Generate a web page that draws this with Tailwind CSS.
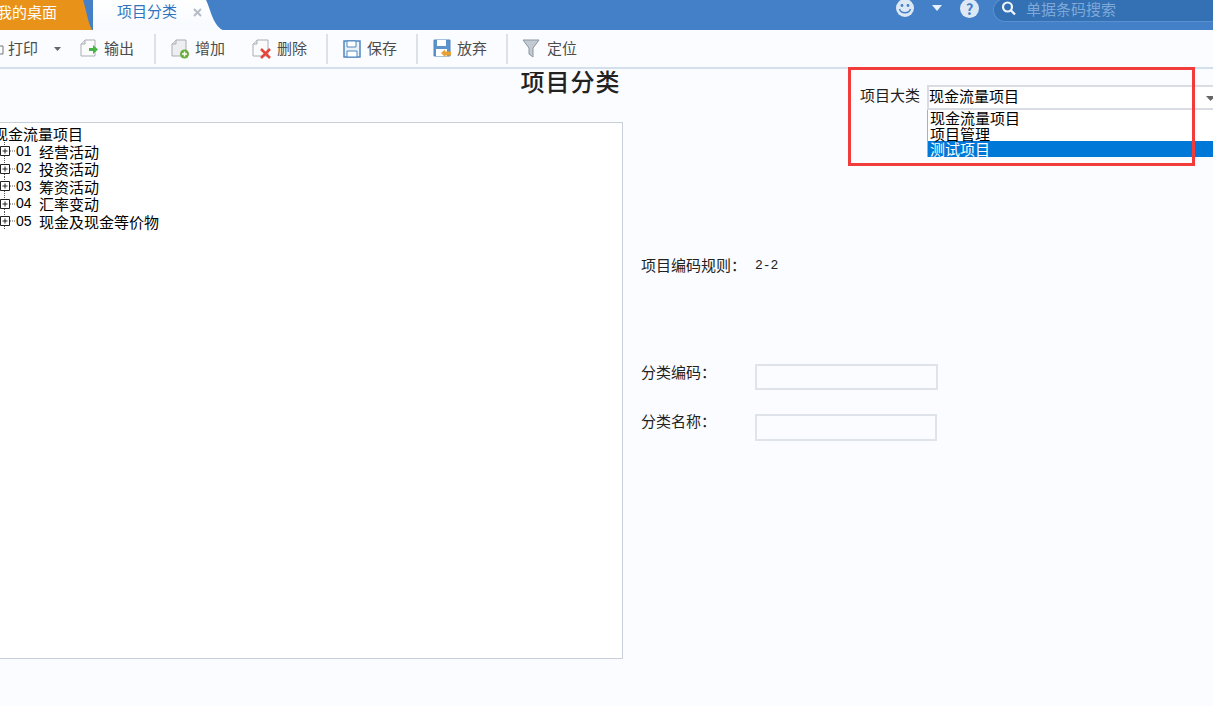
<!DOCTYPE html>
<html lang="zh">
<head>
    <meta charset="UTF-8">
    <title>项目分类</title>
    <script src="https://cdn.jsdelivr.net/npm/@tailwindcss/browser@4"></script>
</head>
<body class="w-[1213px] h-[706px] overflow-hidden bg-[#fafcff] font-['Noto_Sans_CJK_SC','Liberation_Sans',sans-serif] text-[#222]">
    <!-- top bar -->
    <header class="h-[30px] bg-[#4480c8] flex items-stretch relative">
        <div class="relative w-[93px] h-[31px] text-white text-[15px] leading-[23px]">
            <svg class="absolute inset-0" width="93" height="31"><path d="M0 0H83C86 8 88 25 93 31H0Z" fill="#e9921a"/></svg>
            <span class="relative -ml-[3px] block">我的桌面</span>
        </div>
        <div class="relative w-[132px] h-[31px] text-[#2f74bd] text-[15px] leading-[22px]">
            <svg class="absolute inset-0" width="132" height="31">
                <defs><linearGradient id="tabg" x1="0" y1="0" x2="0" y2="1"><stop offset="0" stop-color="#ffffff"/><stop offset="1" stop-color="#f6f9fe"/></linearGradient></defs>
                <path d="M0 0H113C118 10 120 27 132 31H0Z" fill="url(#tabg)"/>
            </svg>
            <span class="absolute left-[24px] top-0">项目分类</span>
            <svg class="absolute left-[100px] top-[8px]" width="9" height="9" viewBox="0 0 9 9"><path d="M1 1L8 8M8 1L1 8" stroke="#b4bcc8" stroke-width="2"/></svg>
        </div>
        <div class="ml-auto flex items-center h-[18px]">
            <svg width="20" height="20" viewBox="0 0 20 20" class="mr-[17px] ml-[-1px]">
                <circle cx="10" cy="9" r="9" fill="#dde8f5"/>
                <circle cx="7" cy="6.500" r="1.400" fill="#4480c8"/><circle cx="13" cy="6.500" r="1.400" fill="#4480c8"/>
                <path d="M4.500 10C6 15 14 15 15.500 10" stroke="#4480c8" stroke-width="1.400" fill="none"/>
            </svg>
            <svg width="10" height="6" viewBox="0 0 10 6" class="mr-[18px] -mt-[2px]"><path d="M0 0H10L5 6Z" fill="#e8f0f8"/></svg>
            <span class="w-[19px] h-[19px] -mt-[2px] rounded-full bg-[#dde8f5] text-[#4480c8] text-[15px] leading-[19px] font-bold text-center mr-[14px]">?</span>
            <div class="w-[221px] h-[24px] mt-[2px] -mr-[1px] rounded-l-full rounded-r-[10px] bg-[#3370b4] border border-[#5a90cf] flex items-center pl-[6px] text-[#7fa9d8] text-[15px]">
                <svg width="17" height="17" viewBox="0 0 17 17" class="-mt-[3px]"><circle cx="7.500" cy="7" r="4.500" stroke="#eef4fb" stroke-width="2.200" fill="none"/><path d="M11 10.500L15 14.500" stroke="#eef4fb" stroke-width="2.400"/></svg>
                <span class="ml-[9px] -mt-[1px]">单据条码搜索</span>
            </div>
        </div>
    </header>

    <!-- toolbar -->
    <nav class="h-[39px] bg-[#fafcff] border-b-2 border-[#d3dfec] flex items-center text-[15px] text-[#4c4c4c] relative">
        <svg width="6" height="14" viewBox="0 0 6 14" class="-mr-[1px] mt-[1px]"><path d="M0 4H3V12H0" stroke="#777" fill="none"/></svg>
        <span class="ml-[3px] w-[30px]">打印</span>
        <svg width="7" height="4" viewBox="0 0 7 4" class="ml-[16px]"><path d="M0 0H7L3.500 4Z" fill="#666"/></svg>
        <svg width="19" height="19" viewBox="0 0 19 19" class="ml-[19px]">
            <path d="M5 1H15V17H1V5Z" fill="#fbfbfb" stroke="#a8aeb5"/><path d="M1 5H5V1" fill="#e4e6e9" stroke="#a8aeb5"/><path d="M9 9H13V6L18 10.500L13 15V12H9Z" fill="#49b445"/>
        </svg>
        <span class="ml-[5px]">输出</span>
        <i class="w-[2px] h-[30px] bg-[#dde2e8] ml-[20px]"></i>
        <svg width="20" height="20" viewBox="0 0 20 20" class="ml-[14px]">
            <path d="M6 1H16V17H2V5Z" fill="#eceef0" stroke="#a8aeb5"/><path d="M2 5H6V1" fill="#dfe2e5" stroke="#a8aeb5"/><circle cx="14.500" cy="15" r="4.500" fill="#69ad3a"/><path d="M14.500 12.500V17.500M12 15H17" stroke="#fff" stroke-width="1.500"/>
        </svg>
        <span class="ml-[5px]">增加</span>
        <svg width="20" height="20" viewBox="0 0 20 20" class="ml-[27px]">
            <path d="M5 1H16V17H1V5Z" fill="#fbfbfb" stroke="#a8aeb5"/><path d="M1 5H5V1" fill="#e4e6e9" stroke="#a8aeb5"/><path d="M9 10L18 19M18 10L9 19" stroke="#e5453c" stroke-width="2.500"/>
        </svg>
        <span class="ml-[5px]">删除</span>
        <i class="w-[2px] h-[30px] bg-[#dde2e8] ml-[19px]"></i>
        <svg width="18" height="18" viewBox="0 0 18 18" class="ml-[15px]">
            <path d="M1 1H17V17H1Z" fill="#eaf1f9" stroke="#4f87c0" stroke-width="1.500"/><path d="M4 1H13V7H4Z" fill="#fff" stroke="#4f87c0"/><path d="M4 11H14V17H4Z" fill="#fff" stroke="#4f87c0"/>
        </svg>
        <span class="ml-[6px]">保存</span>
        <i class="w-[2px] h-[30px] bg-[#dde2e8] ml-[19px]"></i>
        <svg width="19" height="19" viewBox="0 0 19 19" class="ml-[15px]">
            <path d="M1 1H17V17H1Z" fill="#5b93cc" stroke="#4f87c0"/><path d="M4 1H13V7H4Z" fill="#fff"/><path d="M3 10H14V17H3Z" fill="#fff"/><path d="M8 14L12 10.500V12.500H18V16.500H12V18Z" fill="#e9a032"/>
        </svg>
        <span class="ml-[5px]">放弃</span>
        <i class="w-[2px] h-[30px] bg-[#dde2e8] ml-[19px]"></i>
        <svg width="18" height="19" viewBox="0 0 18 19" class="ml-[14px]">
            <path d="M1 1H17L11 9V18L7 15V9Z" fill="#c3cad1" stroke="#8a96a3"/>
        </svg>
        <span class="ml-[7px]">定位</span>
    </nav>

    <!-- page content -->
    <main class="relative h-[637px]">
        <h1 class="w-[1141px] h-[53px] text-center text-[24px] leading-[24px] font-medium tracking-[1px] text-[#222]">项目分类</h1>
        <div class="flex">
            <section class="w-[625px] -ml-[2px] h-[537px] bg-white border border-[#c9cfd8] text-[15px] leading-[17.500px] text-black pt-[2px] shrink-0">
                <div class="-ml-[6px]">现金流量项目</div>
                <ul>
                    <li class="flex items-center h-[17.500px]">
                        <svg width="17" height="18" viewBox="0 0 17 18" class="shrink-0"><path d="M5.500 0V4M5.500 14V18M11 9H17" stroke="#555" stroke-dasharray="1 1"/><path d="M1.500 4.500H10.500V13.500H1.500ZM3.500 9H8.500M6 6.500V11.500" stroke="#222" fill="none"/></svg>
                        <span class="w-[23px] font-['Liberation_Sans'] text-[14px]">01</span>
                        <span>经营活动</span>
                    </li>
                    <li class="flex items-center h-[17.500px]">
                        <svg width="17" height="18" viewBox="0 0 17 18" class="shrink-0"><path d="M5.500 0V4M5.500 14V18M11 9H17" stroke="#555" stroke-dasharray="1 1"/><path d="M1.500 4.500H10.500V13.500H1.500ZM3.500 9H8.500M6 6.500V11.500" stroke="#222" fill="none"/></svg>
                        <span class="w-[23px] font-['Liberation_Sans'] text-[14px]">02</span>
                        <span>投资活动</span>
                    </li>
                    <li class="flex items-center h-[17.500px]">
                        <svg width="17" height="18" viewBox="0 0 17 18" class="shrink-0"><path d="M5.500 0V4M5.500 14V18M11 9H17" stroke="#555" stroke-dasharray="1 1"/><path d="M1.500 4.500H10.500V13.500H1.500ZM3.500 9H8.500M6 6.500V11.500" stroke="#222" fill="none"/></svg>
                        <span class="w-[23px] font-['Liberation_Sans'] text-[14px]">03</span>
                        <span>筹资活动</span>
                    </li>
                    <li class="flex items-center h-[17.500px]">
                        <svg width="17" height="18" viewBox="0 0 17 18" class="shrink-0"><path d="M5.500 0V4M5.500 14V18M11 9H17" stroke="#555" stroke-dasharray="1 1"/><path d="M1.500 4.500H10.500V13.500H1.500ZM3.500 9H8.500M6 6.500V11.500" stroke="#222" fill="none"/></svg>
                        <span class="w-[23px] font-['Liberation_Sans'] text-[14px]">04</span>
                        <span>汇率变动</span>
                    </li>
                    <li class="flex items-center h-[17.500px]">
                        <svg width="17" height="18" viewBox="0 0 17 18" class="shrink-0"><path d="M5.500 0V4M5.500 14V18M11 9H17" stroke="#555" stroke-dasharray="1 1"/><path d="M1.500 4.500H10.500V13.500H1.500ZM3.500 9H8.500M6 6.500V11.500" stroke="#222" fill="none"/></svg>
                        <span class="w-[23px] font-['Liberation_Sans'] text-[14px]">05</span>
                        <span>现金及现金等价物</span>
                    </li>
                </ul>
            </section>
            <section class="ml-[18px] text-[15px] leading-[20px] text-[#222]">
                <div class="flex mt-[133px]">
                    <span class="w-[114px] whitespace-nowrap">项目编码规则：</span>
                    <span class="font-['Liberation_Mono'] text-[13px] mt-[1px]">2-2</span>
                </div>
                <div class="flex mt-[86px]">
                    <span class="w-[114px] whitespace-nowrap">分类编码：</span>
                    <div class="w-[183px] h-[26px] mt-[2px] border-2 border-[#dfe3ea] bg-[#fafcff]"></div>
                </div>
                <div class="flex mt-[21px]">
                    <span class="w-[114px] whitespace-nowrap">分类名称：</span>
                    <div class="w-[182px] h-[27px] mt-[3px] border-2 border-[#dfe3ea] bg-[#fafcff]"></div>
                </div>
            </section>
        </div>

        <!-- open dropdown -->
        <div class="absolute left-[860px] top-[16px] text-[15px] leading-[20px] flex">
            <span class="w-[67px] text-[#222]">项目大类</span>
            <div class="w-[300px] text-[15px] text-black">
                <div class="h-[25px] border-2 border-[#d9dde3] bg-white flex items-center pl-[1px] relative">
                    <span class="-mt-[3px] -ml-[1px]">现金流量项目</span>
                    <svg width="9" height="5" viewBox="0 0 9 5" class="absolute left-[277px] top-[9px]"><path d="M0 0H9L4.500 5Z" fill="#666"/></svg>
                </div>
                <ul class="h-[47px] border-l border-[#aab0b8] bg-white leading-[15.500px]">
                    <li class="pl-[2px] h-[16px]">现金流量项目</li>
                    <li class="pl-[2px] h-[15px]">项目管理</li>
                    <li class="pl-[2px] h-[16px] bg-[#0078d7] text-white">测试项目</li>
                </ul>
            </div>
        </div>
        <!-- red annotation box -->
        <div class="absolute left-[848px] -top-[2px] w-[347px] h-[99px] border-[3px] border-[#f23c3c]"></div>
    </main>
</body>
</html>
